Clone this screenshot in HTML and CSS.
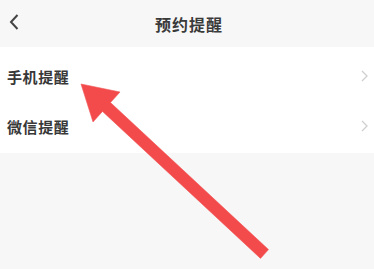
FILE: index.html
```html
<!DOCTYPE html>
<html lang="zh">
<head>
<meta charset="utf-8">
<link rel="stylesheet" href="styles.css">
</head>
<body>
<div class="page">
  <header class="nav">
    <svg class="back" width="12" height="18" viewBox="0 0 12 18"><path d="M9.5 2 L3 9 L9.5 16" fill="none" stroke="#444" stroke-width="2"/></svg>
    <div class="title">预约提醒</div>
  </header>
  <section class="list">
    <div class="row"><span class="label">手机提醒</span><svg class="chev" width="7" height="12" viewBox="0 0 7 12"><path d="M1 1 L6 6 L1 11" fill="none" stroke="#cfcfcf" stroke-width="1.3"/></svg></div>
    <div class="row"><span class="label">微信提醒</span><svg class="chev" width="7" height="12" viewBox="0 0 7 12"><path d="M1 1 L6 6 L1 11" fill="none" stroke="#cfcfcf" stroke-width="1.3"/></svg></div>
  </section>
  <svg class="arrow" width="374" height="269" viewBox="0 0 374 269">
    <polygon points="81,84 120,92 110.5,102.6 268.5,249.6 260.5,258.4 102.5,111.4 93,122" fill="#f34a4b" stroke="#f25a5a" stroke-width="0.6" stroke-linejoin="miter"/>
  </svg>
</div>
</body>
</html>
```
FILE: styles.css
```css
html, body {
  margin: 0;
  padding: 0;
  background: #f7f7f7;
}
.page {
  position: relative;
  width: 374px;
  height: 269px;
  overflow: hidden;
  font-family: "Noto Sans CJK SC", "Noto Sans", sans-serif;
  background: #f7f7f7;
}
.nav {
  height: 47px;
  display: flex;
  align-items: center;
  justify-content: center;
  position: relative;
  background: #f7f7f7;
}
.back {
  position: absolute;
  left: 8px;
  top: 13px;
}
.title {
  font-size: 16px;
  font-weight: 700;
  color: #3a3a3a;
  letter-spacing: 1px;
  margin-left: 4px;
}
.list {
  background: #fff;
  height: 106px;
  display: flex;
  flex-direction: column;
}
.row {
  height: 53px;
  display: flex;
  align-items: center;
  justify-content: space-between;
  padding: 0 6px 0 7px;
}
.label {
  font-size: 15px;
  font-weight: 700;
  color: #383838;
  letter-spacing: 0.6px;
  position: relative;
  top: 3px;
}
.chev {
  position: relative;
  top: 2px;
}
.row + .row .label { top: 0; }
.row + .row .chev { top: -1px; }
.arrow {
  position: absolute;
  left: 0;
  top: 0;
}
```
